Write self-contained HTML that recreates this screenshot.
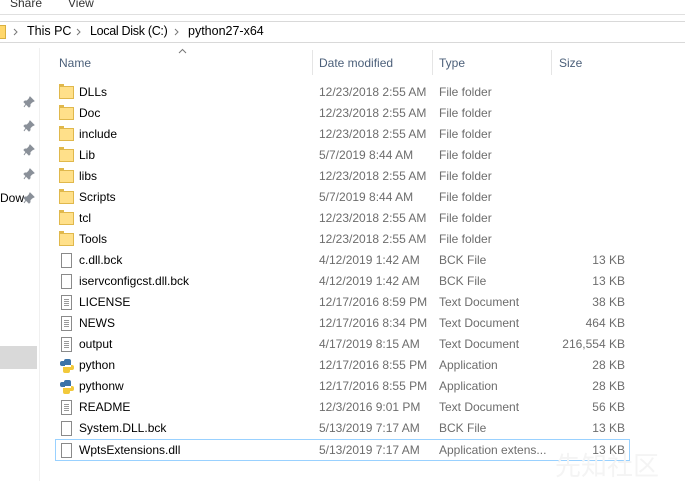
<!DOCTYPE html>
<html><head><meta charset="utf-8"><style>
body{margin:0;width:685px;height:481px;background:#fff;font-family:"Liberation Sans",sans-serif;font-size:12px;color:#000;position:relative;overflow:hidden}
.a{position:absolute;white-space:nowrap}
.g{color:#6d6d6d}
.row{position:absolute;left:0;height:21px;width:685px}
.row span{position:absolute;top:4px;white-space:nowrap}
.n{left:79px}.d{left:319px;color:#6d6d6d}.t{left:439px;color:#6d6d6d}.s{right:60px;color:#6d6d6d}
.fold{position:absolute;left:59px;top:5px;width:15px;height:13px;background:#ffe08a;border:1px solid #e0b84c;box-sizing:border-box}
.fold:before{content:"";position:absolute;left:-1px;top:-3px;width:5px;height:3px;background:#e0b84c}
.doc{position:absolute;left:61px;top:4px;width:11px;height:15px;border:1px solid #8a8a8a;background:#fff;box-sizing:border-box}
.doc.l:after{content:"";position:absolute;left:2px;top:3px;width:5px;height:8px;background:repeating-linear-gradient(#999 0 1px,transparent 1px 2px)}
.pin{position:absolute;left:23px}
</style></head><body>
<div class="a" style="left:10px;top:-4px;color:#333">Share</div>
<div class="a" style="left:68px;top:-4px;color:#333">View</div>
<div class="a" style="left:0;top:14px;width:685px;height:1px;background:#e0e0e0"></div>
<div class="a" style="left:0;top:21px;width:685px;height:1px;background:#d9d9d9"></div>
<div class="a" style="left:0;top:42px;width:685px;height:1px;background:#d9d9d9"></div>
<div class="a" style="left:-4px;top:25px;width:8px;height:12px;background:#ffd76b;border:1px solid #d8b040"></div>
<svg class="a" style="left:13px;top:28px" width="6" height="8"><path d="M1 1l3 3-3 3" stroke="#777" fill="none"/></svg>
<div class="a" style="left:27px;top:24px;font-size:12.5px">This PC</div>
<svg class="a" style="left:76px;top:28px" width="6" height="8"><path d="M1 1l3 3-3 3" stroke="#777" fill="none"/></svg>
<div class="a" style="left:90px;top:24px;font-size:12.5px;letter-spacing:-0.3px">Local Disk (C:)</div>
<svg class="a" style="left:174px;top:28px" width="6" height="8"><path d="M1 1l3 3-3 3" stroke="#777" fill="none"/></svg>
<div class="a" style="left:188px;top:24px;font-size:12.5px">python27-x64</div>
<div class="a" style="left:39px;top:48px;width:1px;height:433px;background:#f0f0f0"></div>
<div class="a" style="left:0;top:346px;width:37px;height:23px;background:#d9d9d9"></div>
<svg class="pin" style="top:96px" width="12" height="12"><path d="M7 1l4 4-2 1-2 2 0 2-1 1-5-5 1-1h2l2-2z M3 8l-2 3" fill="#8a9099" stroke="#8a9099"/></svg>
<svg class="pin" style="top:120px" width="12" height="12"><path d="M7 1l4 4-2 1-2 2 0 2-1 1-5-5 1-1h2l2-2z M3 8l-2 3" fill="#8a9099" stroke="#8a9099"/></svg>
<svg class="pin" style="top:144px" width="12" height="12"><path d="M7 1l4 4-2 1-2 2 0 2-1 1-5-5 1-1h2l2-2z M3 8l-2 3" fill="#8a9099" stroke="#8a9099"/></svg>
<svg class="pin" style="top:168px" width="12" height="12"><path d="M7 1l4 4-2 1-2 2 0 2-1 1-5-5 1-1h2l2-2z M3 8l-2 3" fill="#8a9099" stroke="#8a9099"/></svg>
<svg class="pin" style="top:192px" width="12" height="12"><path d="M7 1l4 4-2 1-2 2 0 2-1 1-5-5 1-1h2l2-2z M3 8l-2 3" fill="#8a9099" stroke="#8a9099"/></svg>
<div class="a" style="left:0;top:191px">Dow</div>
<svg class="a" style="left:178px;top:48px" width="9" height="6"><path d="M1 5l3.5-3.5L8 5" stroke="#777" fill="none"/></svg>
<div class="a" style="left:59px;top:56px;color:#4c607a">Name</div>
<div class="a" style="left:319px;top:56px;color:#4c607a">Date modified</div>
<div class="a" style="left:439px;top:56px;color:#4c607a">Type</div>
<div class="a" style="left:559px;top:56px;color:#4c607a">Size</div>
<div class="a" style="left:312px;top:50px;width:1px;height:25px;background:#e5e5e5"></div>
<div class="a" style="left:432px;top:50px;width:1px;height:25px;background:#e5e5e5"></div>
<div class="a" style="left:551px;top:50px;width:1px;height:25px;background:#e5e5e5"></div>

<div class="row" style="top:81px"><i class="fold"></i><span class="n">DLLs</span><span class="d">12/23/2018 2:55 AM</span><span class="t">File folder</span></div>
<div class="row" style="top:102px"><i class="fold"></i><span class="n">Doc</span><span class="d">12/23/2018 2:55 AM</span><span class="t">File folder</span></div>
<div class="row" style="top:123px"><i class="fold"></i><span class="n">include</span><span class="d">12/23/2018 2:55 AM</span><span class="t">File folder</span></div>
<div class="row" style="top:144px"><i class="fold"></i><span class="n">Lib</span><span class="d">5/7/2019 8:44 AM</span><span class="t">File folder</span></div>
<div class="row" style="top:165px"><i class="fold"></i><span class="n">libs</span><span class="d">12/23/2018 2:55 AM</span><span class="t">File folder</span></div>
<div class="row" style="top:186px"><i class="fold"></i><span class="n">Scripts</span><span class="d">5/7/2019 8:44 AM</span><span class="t">File folder</span></div>
<div class="row" style="top:207px"><i class="fold"></i><span class="n">tcl</span><span class="d">12/23/2018 2:55 AM</span><span class="t">File folder</span></div>
<div class="row" style="top:228px"><i class="fold"></i><span class="n">Tools</span><span class="d">12/23/2018 2:55 AM</span><span class="t">File folder</span></div>
<div class="row" style="top:249px"><i class="doc"></i><span class="n">c.dll.bck</span><span class="d">4/12/2019 1:42 AM</span><span class="t">BCK File</span><span class="s">13 KB</span></div>
<div class="row" style="top:270px"><i class="doc"></i><span class="n">iservconfigcst.dll.bck</span><span class="d">4/12/2019 1:42 AM</span><span class="t">BCK File</span><span class="s">13 KB</span></div>
<div class="row" style="top:291px"><i class="doc l"></i><span class="n">LICENSE</span><span class="d">12/17/2016 8:59 PM</span><span class="t">Text Document</span><span class="s">38 KB</span></div>
<div class="row" style="top:312px"><i class="doc l"></i><span class="n">NEWS</span><span class="d">12/17/2016 8:34 PM</span><span class="t">Text Document</span><span class="s">464 KB</span></div>
<div class="row" style="top:333px"><i class="doc l"></i><span class="n">output</span><span class="d">4/17/2019 8:15 AM</span><span class="t">Text Document</span><span class="s">216,554 KB</span></div>
<div class="row" style="top:354px"><svg style="position:absolute;left:59px;top:4px" width="15" height="15"><path d="M7 1h3a2 2 0 0 1 2 2v4H6v1H3a2 2 0 0 1-2-2V5a2 2 0 0 1 2-2h2V3a2 2 0 0 1 2-2z" fill="#3b73a8"/><path d="M12 7h1a2 2 0 0 1 2 2v1a2 2 0 0 1-2 2h-2v1a2 2 0 0 1-2 2H6a2 2 0 0 1-2-2V9h8z" fill="#f2c93b"/></svg><span class="n">python</span><span class="d">12/17/2016 8:55 PM</span><span class="t">Application</span><span class="s">28 KB</span></div>
<div class="row" style="top:375px"><svg style="position:absolute;left:59px;top:4px" width="15" height="15"><path d="M7 1h3a2 2 0 0 1 2 2v4H6v1H3a2 2 0 0 1-2-2V5a2 2 0 0 1 2-2h2V3a2 2 0 0 1 2-2z" fill="#3b73a8"/><path d="M12 7h1a2 2 0 0 1 2 2v1a2 2 0 0 1-2 2h-2v1a2 2 0 0 1-2 2H6a2 2 0 0 1-2-2V9h8z" fill="#f2c93b"/></svg><span class="n">pythonw</span><span class="d">12/17/2016 8:55 PM</span><span class="t">Application</span><span class="s">28 KB</span></div>
<div class="row" style="top:396px"><i class="doc l"></i><span class="n">README</span><span class="d">12/3/2016 9:01 PM</span><span class="t">Text Document</span><span class="s">56 KB</span></div>
<div class="row" style="top:417px"><i class="doc"></i><span class="n">System.DLL.bck</span><span class="d">5/13/2019 7:17 AM</span><span class="t">BCK File</span><span class="s">13 KB</span></div>
<div class="a" style="left:55px;top:439px;width:573px;height:20px;border:1px solid #99d1ff"></div>
<div class="row" style="top:439px"><i class="doc"></i><span class="n">WptsExtensions.dll</span><span class="d">5/13/2019 7:17 AM</span><span class="t">Application extens...</span><span class="s">13 KB</span></div>
<div class="a" style="left:555px;top:446px;font-size:26px;color:#f4f4f4;font-family:'Liberation Sans','Noto Sans CJK SC',sans-serif">先知社区</div>
</body></html>
